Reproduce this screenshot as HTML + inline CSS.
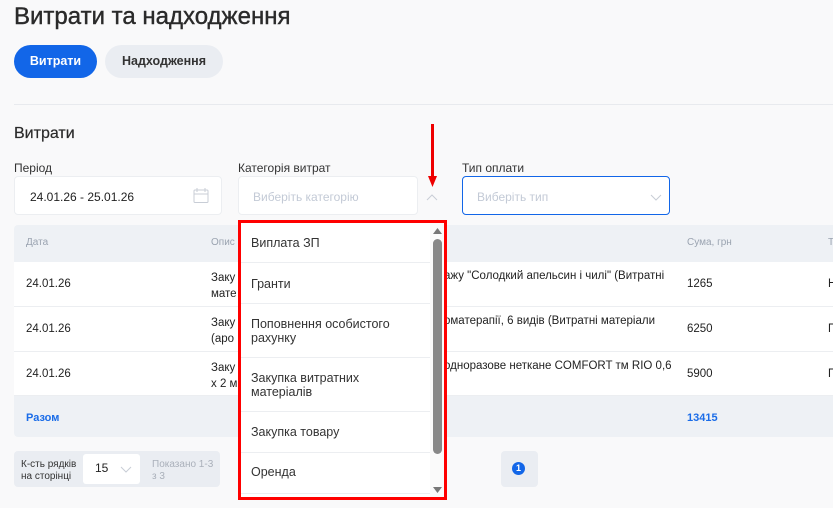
<!DOCTYPE html>
<html><head><meta charset="utf-8"><style>
*{box-sizing:border-box;margin:0;padding:0}
body{width:833px;height:508px;overflow:hidden;background:#f9f9fa;font-family:"Liberation Sans",sans-serif;color:#222;position:relative}
.a{position:absolute}
.lbl{font-size:12px;color:#333}
.inp{background:#fff;border:1px solid #eceef1;border-radius:4px;height:39px}
.th{font-size:10px;color:#9aa3b0}
.td{font-size:11.5px;color:#222}
.row{background:#fff;left:14px;width:819px;border-bottom:1px solid #eceef1}
.it{font-size:12.5px;color:#333;left:10px;position:absolute;line-height:14px}
.sep{position:absolute;left:0;width:192px;height:1px;background:#eceef1}
</style></head><body>
<div class="a" style="left:14px;top:3px;font-size:24px;color:#2a2a2a;-webkit-text-stroke:0.4px #2a2a2a">Витрати та надходження</div>
<div class="a" style="left:14px;top:45px;width:83px;height:33px;border-radius:17px;background:#1266e8;color:#fff;font-size:12.5px;font-weight:bold;text-align:center;line-height:33px">Витрати</div>
<div class="a" style="left:105px;top:45px;width:118px;height:33px;border-radius:17px;background:#eaedf2;color:#333;font-size:12.5px;font-weight:bold;text-align:center;line-height:33px">Надходження</div>
<div class="a" style="left:14px;top:104px;width:819px;height:1px;background:#e8eaee"></div>
<div class="a" style="left:14px;top:125px;font-size:16px;color:#2a2a2a;-webkit-text-stroke:0.2px #2a2a2a">Витрати</div>
<div class="a lbl" style="left:14px;top:161px">Період</div>
<div class="a lbl" style="left:238px;top:161px">Категорія витрат</div>
<div class="a lbl" style="left:462px;top:161px">Тип оплати</div>
<div class="a inp" style="left:14px;top:176px;width:208px"><span class="a" style="left:15px;top:13px;font-size:12px;color:#222">24.01.26 - 25.01.26</span>
<svg class="a" style="left:178px;top:10px" width="16" height="17" viewBox="0 0 16 17" fill="none" stroke="#c8cdd6" stroke-width="1"><rect x="1" y="3" width="14" height="12.5" rx="1"/><path d="M1 7h14M4 1v4M12 1v4"/></svg></div>
<div class="a inp" style="left:238px;top:176px;width:180px"><span class="a" style="left:14px;top:13px;font-size:12px;color:#c3cad6">Виберіть категорію</span>
<svg class="a" style="left:187px;top:17px" width="12" height="7" viewBox="0 0 12 7" fill="none" stroke="#c8cdd6"><path d="M1 6l5-5 5 5"/></svg></div>
<div class="a" style="left:462px;top:176px;width:208px;height:39px;background:#fff;border:1px solid #1266e8;border-radius:4px"><span class="a" style="left:14px;top:13px;font-size:12px;color:#c3cad6">Виберіть тип</span>
<svg class="a" style="left:187px;top:17px" width="12" height="7" viewBox="0 0 12 7" fill="none" stroke="#c8cdd6"><path d="M1 1l5 5 5-5"/></svg></div>
<!-- red arrow -->
<div class="a" style="left:431px;top:124px;width:3px;height:54px;background:#e00"></div>
<svg class="a" style="left:428px;top:176px" width="9" height="11"><path d="M0 0h9L4.5 11z" fill="#e00"/></svg>
<!-- table -->
<div class="a" style="left:14px;top:225px;width:819px;height:37px;background:#eef1f5;border-radius:4px 0 0 0"></div>
<div class="a th" style="left:26px;top:237px">Дата</div>
<div class="a th" style="left:211px;top:237px">Опис</div>
<div class="a th" style="left:687px;top:237px">Сума, грн</div>
<div class="a th" style="left:828px;top:237px">Т</div>
<div class="a row" style="top:262px;height:45px"></div>
<div class="a row" style="top:307px;height:45px"></div>
<div class="a row" style="top:352px;height:44px"></div>
<div class="a td" style="left:26px;top:278px">24.01.26</div>
<div class="a td" style="left:26px;top:323px">24.01.26</div>
<div class="a td" style="left:26px;top:368px">24.01.26</div>
<div class="a td" style="left:211px;top:270px;line-height:16px">Заку<br>мате</div>
<div class="a td" style="left:211px;top:315px;line-height:16px">Заку<br>(аро</div>
<div class="a td" style="left:211px;top:360px;line-height:16px">Заку<br>х 2 м</div>
<div class="a td" style="left:444px;top:270px">ажу "Солодкий апельсин і чилі" (Витратні</div>
<div class="a td" style="left:444px;top:315px">оматерапії, 6 видів (Витратні матеріали</div>
<div class="a td" style="left:444px;top:360px">одноразове неткане COMFORT тм RIO 0,6</div>
<div class="a td" style="left:687px;top:278px">1265</div>
<div class="a td" style="left:687px;top:323px">6250</div>
<div class="a td" style="left:687px;top:368px">5900</div>
<div class="a td" style="left:828px;top:278px">Н</div>
<div class="a td" style="left:828px;top:323px">П</div>
<div class="a td" style="left:828px;top:368px">П</div>
<div class="a" style="left:14px;top:396px;width:819px;height:41px;background:#eef1f5;border-radius:0 0 0 4px"></div>
<div class="a" style="left:26px;top:412px;font-size:11px;font-weight:bold;color:#1a6ce8">Разом</div>
<div class="a" style="left:687px;top:412px;font-size:11px;font-weight:bold;color:#1a6ce8">13415</div>
<!-- pagination -->
<div class="a" style="left:14px;top:451px;width:206px;height:36px;background:#eaedf2;border-radius:4px"></div>
<div class="a" style="left:21px;top:459px;font-size:10px;color:#333;line-height:12px">К-сть рядків<br>на сторінці</div>
<div class="a" style="left:83px;top:454px;width:57px;height:30px;background:#fff;border-radius:3px"><span class="a" style="left:12px;top:7px;font-size:12px">15</span>
<svg class="a" style="left:37px;top:12px" width="12" height="7" fill="none" stroke="#c8cdd6"><path d="M1 1l5 5 5-5"/></svg></div>
<div class="a" style="left:152px;top:459px;font-size:10px;color:#aab0ba;line-height:12px">Показано 1-3<br>з 3</div>
<div class="a" style="left:501px;top:451px;width:37px;height:36px;background:#eaedf2;border-radius:4px"></div>
<div class="a" style="left:512px;top:462px;width:13px;height:13px;border-radius:50%;background:#1266e8;color:#fff;font-size:9px;font-weight:bold;text-align:center;line-height:13px">1</div>
<!-- dropdown -->
<div class="a" style="left:238px;top:220px;width:209px;height:280px;border:3px solid #f00;background:#fff;overflow:hidden">
<div class="it" style="top:13px">Виплата ЗП</div>
<div class="sep" style="top:39px"></div>
<div class="it" style="top:54px">Гранти</div>
<div class="sep" style="top:80px"></div>
<div class="it" style="top:94px">Поповнення особистого<br>рахунку</div>
<div class="sep" style="top:134px"></div>
<div class="it" style="top:148px">Закупка витратних<br>матеріалів</div>
<div class="sep" style="top:188px"></div>
<div class="it" style="top:202px">Закупка товару</div>
<div class="sep" style="top:229px"></div>
<div class="it" style="top:242px">Оренда</div>
<div class="sep" style="top:270px"></div>
<div class="a" style="left:189px;top:0;width:14px;height:274px;background:#fafafa"></div>
<svg class="a" style="left:192px;top:5px" width="9" height="6"><path d="M0 6L4.5 0 9 6z" fill="#777"/></svg>
<div class="a" style="left:192px;top:16px;width:9px;height:215px;border-radius:5px;background:#888"></div>
<svg class="a" style="left:192px;top:264px" width="9" height="6"><path d="M0 0h9L4.5 6z" fill="#777"/></svg>
</div>
</body></html>
